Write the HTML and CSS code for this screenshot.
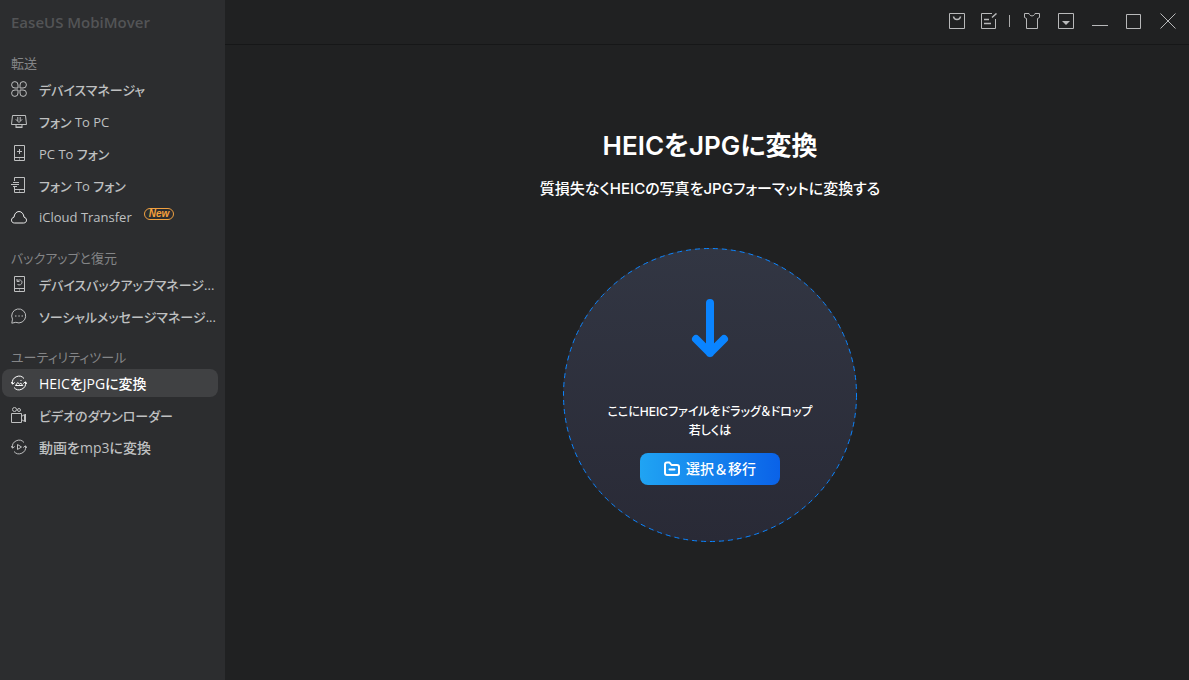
FILE: index.html
```html
<!DOCTYPE html>
<html lang="ja">
<head>
<meta charset="UTF-8">
<meta name="viewport" content="width=device-width, initial-scale=1">
<title>EaseUS MobiMover</title>
<link rel="stylesheet" href="styles.css">
</head>
<body>

<!-- サイドバー -->
<aside class="sidebar">
  <div class="brand">EaseUS MobiMover</div>
  <nav>
    <section class="group">
      <h2>転送</h2>
      <a href="#device">
        <svg class="icon" viewBox="0 0 16 16"><path d="M7 7H4a3.2 3.2 0 1 1 3-3zM9 7V4a3.2 3.2 0 1 1 3 3zM7 9v3a3.2 3.2 0 1 1-3-3zM9 9h3a3.2 3.2 0 1 1-3 3z"/></svg>
        <span>デバイスマネージャ</span>
      </a>
      <a href="#phone-pc">
        <svg class="icon" viewBox="0 0 16 16"><path d="M1.5 2.5h13l1 9H.5zM5 11.5V14h6v-2.5M4.5 14.5h7"/><path d="M6.8 4v4M9.2 4v4M4.8 6.3L8 9.5l3.2-3.2"/></svg>
        <span>フォン To PC</span>
      </a>
      <a href="#pc-phone">
        <svg class="icon" viewBox="0 0 16 16"><path d="M3.5.5h10v15h-10zM3.5 12.5h10M8.5 4v5M6 6.5h5M8 14h1"/></svg>
        <span>PC To フォン</span>
      </a>
      <a href="#phone-phone">
        <svg class="icon" viewBox="0 0 16 16"><path d="M3.5 4V.5h10v15h-10V10M3.5 12.5h10M8 14h1M2 5.5h6M0 7.5h8M2 9.5h4"/></svg>
        <span>フォン To フォン</span>
      </a>
      <a href="#icloud">
        <svg class="icon" viewBox="0 0 16 16"><path class="bright" d="M3.5 14C1.5 14 .5 12.7.5 11.2c0-1.6 1-2.7 2.5-3C3.3 5 5.2 2.5 8 2.5s4.7 2.5 5 5.7c1.5.3 2.5 1.400 2.500 3 0 1.500-1 2.800-3 2.800z"/></svg>
        <span>iCloud Transfer</span>
        <em class="new">New</em>
      </a>
    </section>

    <section class="group">
      <h2>バックアップと復元</h2>
      <a href="#backup">
        <svg class="icon" viewBox="0 0 16 16"><path d="M3.5.5h10v15h-10zM3.5 12.5h10M8 14h1M6 3v2.5h2.5M6.2 5.2C8 3 11 4 11 6.3c0 2.200-2.500 3.400-4.500 2.200"/></svg>
        <span>デバイスバックアップマネージ...</span>
      </a>
      <a href="#social">
        <svg class="icon" viewBox="0 0 16 16"><path d="M.8 15.2l.7-4A7 7 0 1 1 4.8 14.3z"/><path d="M4 8h1.5M7.3 8h1.5M10.5 8H12"/></svg>
        <span>ソーシャルメッセージマネージ...</span>
      </a>
    </section>

    <section class="group">
      <h2>ユーティリティツール</h2>
      <a href="#heic" class="mixed active" aria-current="page">
        <svg class="icon" viewBox="0 0 16 16"><path d="M1.5 9A6.6 6.6 0 0 1 13 3.5M14.5 7A6.6 6.6 0 0 1 3 12.5M0 7l1.5 2.2L3.7 7.5M16 9l-1.5-2.2-2.2 1.7"/><path d="M4.5 10.5l2.3-3 1.7 1.8 1.3-1.2 2 2.4zM9.5 5.5h1"/></svg>
        <span>HEICをJPGに変換</span>
      </a>
      <a href="#video">
        <svg class="icon" viewBox="0 0 16 16"><path d="M.5 6.5h10v9H.5zM10.5 9.5l3-2v7l-3-2M14.5 7v8"/><circle cx="3.5" cy="2.5" r="2"/><circle cx="8" cy="3" r="1.5"/></svg>
        <span>ビデオのダウンローダー</span>
      </a>
      <a href="#mp3" class="mixed">
        <svg class="icon" viewBox="0 0 16 16"><path d="M1.5 9A6.6 6.6 0 0 1 13 3.5M14.5 7A6.6 6.6 0 0 1 3 12.5M0 7l1.5 2.2L3.7 7.5M16 9l-1.5-2.2-2.2 1.7"/><path d="M6.5 5.5v5l4-2.5z"/></svg>
        <span>動画をmp3に変換</span>
      </a>
    </section>
  </nav>
</aside>

<div class="main">
  <!-- タイトルバー -->
  <header class="titlebar">
    <div class="tools">
      <button aria-label="ストア"><svg viewBox="0 0 16 16"><path d="M.5.5h15v15H.5z"/><path class="thick" d="M4.5 3.500c.5 4 6.500 4 7 0"/></svg></button>
      <button aria-label="フィードバック"><svg viewBox="0 0 16 16"><path d="M11 .5H.5v15h14V6"/><path class="thick" d="M3 6.5h5M3 10.5h7M11 4.5L15.500.5"/></svg></button>
    </div>
    <i class="sep"></i>
    <button aria-label="スキン"><svg viewBox="0 0 16 16"><path d="M.5.5H5c.8 3.2 5.2 3.2 6 0h4.5v4l-2 1v10h-11v-10l-2-1z"/></svg></button>
    <button aria-label="メニュー"><svg viewBox="0 0 16 16"><path d="M.5.5h15v15H.5z"/><path class="solid" d="M4 8h8l-4 4z"/></svg></button>
    <button aria-label="最小化"><svg viewBox="0 0 16 16"><path d="M0 12.5h16"/></svg></button>
    <button aria-label="最大化"><svg viewBox="0 0 16 16"><path d="M.5 1.5h14v14H.5z"/></svg></button>
    <button aria-label="閉じる"><svg viewBox="0 0 16 16"><path d="M.5.5l15 15M15.5.5l-15 15"/></svg></button>
  </header>

  <!-- HEIC 変換 -->
  <main class="content">
    <h1>HEICをJPGに変換</h1>
    <p class="lead">質損失なくHEICの写真をJPGフォーマットに変換する</p>
    <div class="drop">
      <svg class="ring" viewBox="0 0 294 294"><circle cx="147" cy="147" r="146.5"/></svg>
      <svg class="arrow" viewBox="0 0 38 60"><path d="M19 5v50M5 41l14 14 14-14"/></svg>
      <p>ここにHEICファイルをドラッグ＆ドロップ<br>若しくは</p>
      <button class="pick">
        <svg viewBox="0 0 16 16"><path d="M1 12V3.5C1 2 1.8 1.5 3 1.5h2.5L7.5 4H13c1.3 0 2 .7 2 2v6c0 1.3-.7 2-2 2H3c-1.3 0-2-.7-2-2zM5.5 8.5h5"/></svg>
        選択＆移行
      </button>
    </div>
  </main>
</div>

</body>
</html>
```
FILE: styles.css
```css
:root{--side:#2c2d2f;--bg:#202122;--line:#161718;--blue:#0a84ff}
*{box-sizing:border-box}
body{
  margin:0;min-height:100vh;display:flex;
  background:var(--bg);color:#fff;
  font-family:Inter,"Noto Sans CJK JP",sans-serif;
  font-feature-settings:"palt"}
h1,h2,p{margin:0}
svg{fill:none;stroke:currentColor;flex:none}
button{padding:0;border:0;background:none;color:inherit;font:inherit;cursor:pointer}

/* サイドバー */
.sidebar{
  width:225px;flex:none;background:var(--side);
  font-family:"Open Sans","Noto Sans CJK JP",sans-serif}
.brand{
  height:51px;padding:10px 11px;
  font-size:15px;line-height:24px;font-weight:600;color:#535456}
.group{margin-bottom:15px}
.group h2{
  padding-left:11px;font-size:13px;line-height:24px;
  font-weight:400;color:#848587}
.group a{
  display:flex;align-items:center;gap:12px;
  height:28px;margin:0 7px 4px 2px;padding-left:9px;
  border-radius:8px;color:#bfc0c1;
  font-size:13px;font-weight:500;white-space:nowrap;text-decoration:none}
.group a:last-child{margin-bottom:0}
.group a.mixed{font-size:14px}
.group a.active{background:#404143;color:#fff}
.icon{width:16px;height:16px}
.bright{stroke:#eee}
.new{
  height:12px;margin-top:-6px;padding:0 4px;
  border:1px solid #f0a040;border-radius:6px;
  font-family:"Liberation Sans",sans-serif;
  font-size:10px;line-height:10px;font-weight:700;color:#f5a03c}

/* タイトルバー */
.main{flex:1;min-width:0;display:flex;flex-direction:column}
.titlebar{
  height:45px;display:flex;align-items:center;justify-content:flex-end;
  gap:18px;padding:0 13px 2px 0;
  border-bottom:1px solid var(--line);color:#b8b9ba}
.titlebar button,.titlebar svg{display:block;width:16px;height:16px}
.tools{display:flex;gap:16px}
.solid{fill:currentColor;stroke:none}
.thick{stroke-width:1.5}
.sep{width:1px;height:12px;margin:0 -4px 0 -6px;background:#aaa}

/* 変換エリア */
.content{
  flex:1;display:flex;flex-direction:column;align-items:center;
  padding:81px 0 40px 6px;text-align:center}
h1{font-size:26px;line-height:40px;font-weight:600}
.lead{margin-top:11px;font-size:15px;line-height:24px;font-weight:500}
.drop{
  position:relative;width:294px;height:294px;margin-top:47px;
  padding-top:50px;border-radius:50%;
  display:flex;flex-direction:column;align-items:center;
  background:linear-gradient(#323643,#292a36)}
.ring{position:absolute;inset:0;stroke:var(--blue);stroke-dasharray:5 4}
.arrow{width:38px;height:60px;stroke:var(--blue);stroke-width:8;stroke-linecap:round;stroke-linejoin:round}
.drop p{margin-top:44px;font-size:12px;line-height:19px;font-weight:500}
.pick{
  position:relative;width:140px;height:32px;margin-top:13px;
  display:flex;align-items:center;justify-content:center;gap:6px;
  border-radius:8px;background:linear-gradient(90deg,#20a4f3,#0a62e8);
  font-size:14px;line-height:20px;font-weight:500;font-feature-settings:normal}
.pick svg{width:16px;height:16px;stroke-width:2;stroke-linejoin:round;stroke-linecap:round}
```
